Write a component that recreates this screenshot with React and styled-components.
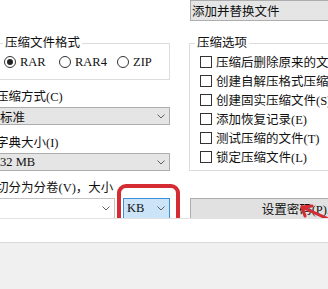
import styled, { createGlobalStyle } from 'styled-components';

const GlobalStyle = createGlobalStyle`
  body {
    margin: 0;
    background: #f0f0f0;
    font-family: "Liberation Serif", "Noto Sans CJK SC", serif;
    font-size: 12.5px;
    color: #111;
  }
`;

const Page = styled.div`
  width: 328px;
  height: 289px;
  overflow: hidden;
  display: flex;
  flex-direction: column;
  background: #f0f0f0;
`;

const TabPage = styled.div`
  flex-shrink: 0;
  height: 243px;
  box-sizing: border-box;
  background: #fff;
  border-bottom: 1px solid #dadada;
`;

const Options = styled.div`
  position: relative;
  display: flex;
  height: 219px;
  box-sizing: border-box;
  border-bottom: 1px solid #e2e2e2;
  overflow: hidden;
`;

const LeftCol = styled.div`
  flex-shrink: 0;
  width: 178px;
  margin-left: -8px;
  padding-top: 36px;
  display: flex;
  flex-direction: column;
`;

const RightCol = styled.div`
  flex-shrink: 0;
  width: 220px;
  margin-left: 19px;
  display: flex;
  flex-direction: column;
`;

const Group = styled.fieldset`
  margin: ${p => p.$top || 0}px 0 0;
  padding: 0 0 ${p => p.$bottom}px ${p => p.$left}px;
  border: 1px solid #dcdcdc;
  min-width: 0;
`;

const Legend = styled.legend`
  padding: 0 2px;
  margin-left: ${p => p.$shift || 0}px;
  line-height: 14px;
`;

const RadioRow = styled.div`
  display: grid;
  grid-template-columns: 55px 58px auto;
  height: 18px;
  margin: 3px 0 0 1px;
  align-items: center;
`;

const Radio = styled.label`
  display: flex;
  align-items: center;
  gap: 4px;
  white-space: nowrap;
`;

const Circle = styled.span`
  width: 12px;
  height: 12px;
  box-sizing: border-box;
  border: 1px solid #333;
  border-radius: 50%;
  display: flex;
  align-items: center;
  justify-content: center;
  background: #fff;
  &::after {
    content: '';
    width: 6px;
    height: 6px;
    border-radius: 50%;
    background: ${p => (p.$on ? '#222' : 'transparent')};
  }
`;

const Label = styled.div`
  margin-top: ${p => p.$top}px;
  padding-left: 4px;
  line-height: 14px;
  white-space: nowrap;
`;

const Combo = styled.div`
  display: flex;
  align-items: center;
  justify-content: space-between;
  height: ${p => p.$h || 18}px;
  margin-top: ${p => p.$top || 0}px;
  margin-left: ${p => p.$ml || 0}px;
  padding: 0 4px 0 ${p => p.$pl || 7}px;
  box-sizing: border-box;
  flex: ${p => (p.$grow ? 1 : 'none')};
  width: ${p => (p.$w ? `${p.$w}px` : 'auto')};
  background: ${p => p.$bg || '#e5e5e5'};
  border: 1px solid ${p => p.$border || '#adadad'};
  white-space: nowrap;
`;

const SplitRow = styled.div`
  display: flex;
  gap: 8px;
  height: 21px;
  margin-top: 3px;
`;

const CheckRow = styled.div`
  display: flex;
  align-items: center;
  gap: 4px;
  height: 19px;
  white-space: nowrap;
  &:first-of-type {
    margin-top: 2px;
  }
`;

const Box = styled.span`
  flex-shrink: 0;
  width: 12px;
  height: 12px;
  box-sizing: border-box;
  border: 1px solid #333;
  background: #fff;
`;

const Button = styled.div`
  margin: 27px 0 0 1px;
  height: 21px;
  width: 218px;
  box-sizing: border-box;
  display: flex;
  align-items: center;
  justify-content: center;
  background: #e1e1e1;
  border: 1px solid #adadad;
  white-space: nowrap;
`;

const Highlight = styled.div`
  position: absolute;
  left: 117px;
  top: 184px;
  width: 63px;
  height: 60px;
  box-sizing: border-box;
  border: 4px solid #d52b33;
  border-radius: 9px;
  pointer-events: none;
`;

const Arrow = styled.svg`
  position: absolute;
  left: 296px;
  top: 200px;
`;

const Footer = styled.div`
  flex: 1;
  background: #f0f0f0;
`;

const Chevron = () => (
  <svg width="8" height="5" viewBox="0 0 8 5">
    <polyline points="0.5,0.5 4,4 7.5,0.5" fill="none" stroke="#606060" strokeWidth="1" />
  </svg>
);

const options = [
  '压缩后删除原来的文件',
  '创建自解压格式压缩文件',
  '创建固实压缩文件(S)',
  '添加恢复记录(E)',
  '测试压缩的文件(T)',
  '锁定压缩文件(L)',
];

const App = () => {
  return (
    <Page>
      <GlobalStyle />
      <TabPage>
        <Options>
          <LeftCol>
            <Group $left={10} $bottom={8}>
              <Legend>压缩文件格式</Legend>
              <RadioRow>
                <Radio><Circle $on />RAR</Radio>
                <Radio><Circle />RAR4</Radio>
                <Radio><Circle />ZIP</Radio>
              </RadioRow>
            </Group>
            <Label $top={10}>压缩方式(C)</Label>
            <Combo $top={3}>标准<Chevron /></Combo>
            <Label $top={11}>字典大小(I)</Label>
            <Combo $top={3}>32 MB<Chevron /></Combo>
            <Label $top={10}>切分为分卷(V)，大小</Label>
            <SplitRow>
              <Combo $grow $h={21} $bg="#fff" $border="#c4c4c4"><span /><Chevron /></Combo>
              <Combo $w={47} $h={21} $pl={3} $bg="#cce4f7" $border="#3c8fd6">KB<Chevron /></Combo>
            </SplitRow>
          </LeftCol>
          <RightCol>
            <Combo $h={21} $ml={1} $pl={1}>添加并替换文件</Combo>
            <Group $top={15} $left={10} $bottom={4}>
              <Legend $shift={-5}>压缩选项</Legend>
              {options.map((text, key) => (
                <CheckRow key={key}>
                  <Box />
                  {text}
                </CheckRow>
              ))}
            </Group>
            <Button>设置密码(P)...</Button>
          </RightCol>
          <Highlight />
          <Arrow width="32" height="19" viewBox="0 0 32 19">
            <path d="M6 7 L32 19 M6 7 L16 6 M6 7 L9 16" fill="none" stroke="#d52b33" strokeWidth="3" strokeLinecap="round" />
          </Arrow>
        </Options>
      </TabPage>
      <Footer />
    </Page>
  );
};

export default App;
